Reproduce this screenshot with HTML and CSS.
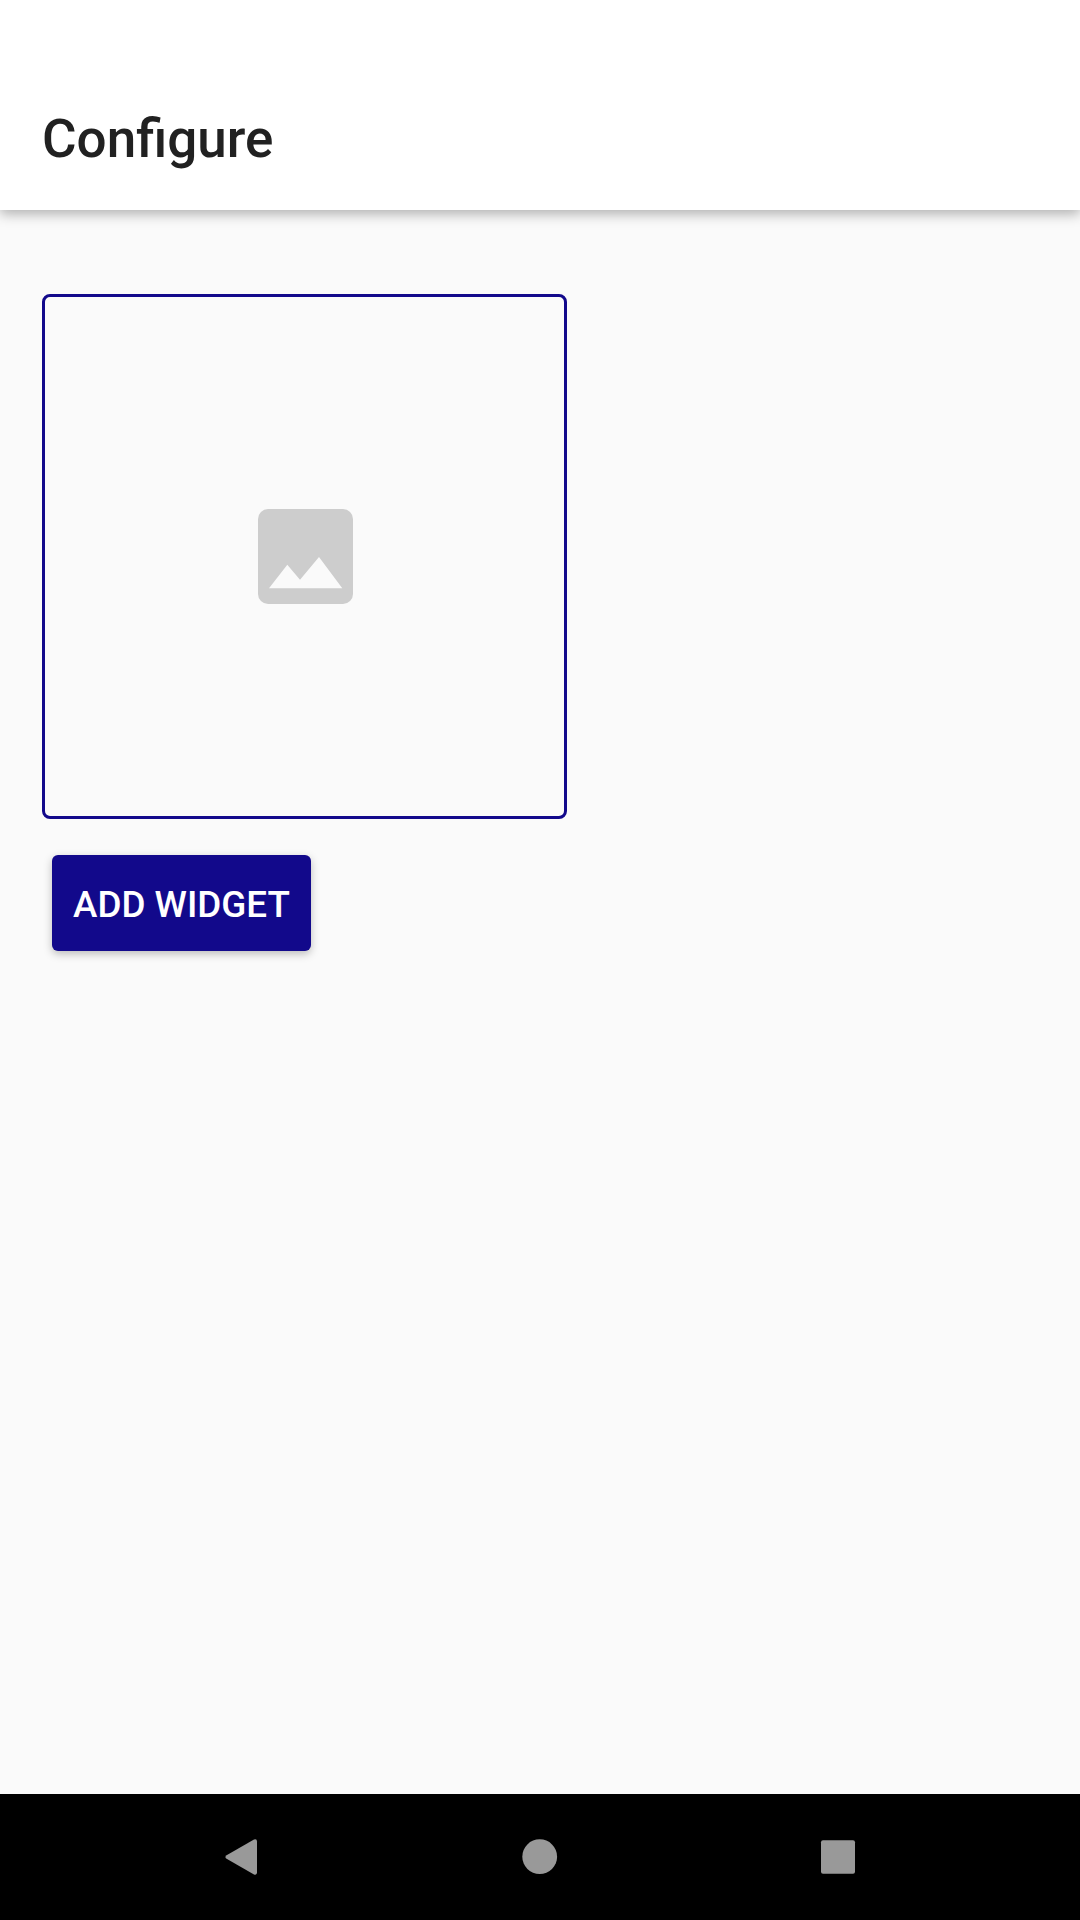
FILE: index.html
```html
<!DOCTYPE html>
<html lang="en">

<head>
    <meta charset="UTF-8">
    <meta name="viewport" content="width=device-width, initial-scale=1.0">
    <title>Configure</title>
    <link rel="stylesheet" href="styles.css">
</head>

<body>
    <header class="toolbar">
        <h1 class="title">Configure</h1>
    </header>
    <main class="content">
        <div class="preview">
            <svg class="placeholder" viewBox="0 0 95 95" aria-hidden="true">
                <rect width="95" height="95" rx="10" fill="#cdcdcd" />
                <polygon points="11,79.3 29.3,55.7 42,70.7 61,48 84.3,79.3" fill="#fafafa" />
            </svg>
        </div>
        <button class="add-btn" type="button">ADD WIDGET</button>
    </main>
    <nav class="navbar">
        <svg class="nav-icon" viewBox="0 0 36 36" aria-hidden="true">
            <path d="M2.6 16.2 L30 0.6 Q33 -0.4 33 2.5 L33 33.5 Q33 36.4 30 35.4 L2.6 19.8 Q0.2 18 2.6 16.2 Z" fill="#999" />
        </svg>
        <svg class="nav-icon" viewBox="0 0 36 36" aria-hidden="true">
            <circle cx="17.7" cy="17.7" r="17.4" fill="#999" />
        </svg>
        <svg class="nav-icon" viewBox="0 0 36 36" aria-hidden="true">
            <rect x="1" y="1.2" width="34" height="33.6" rx="2" fill="#999" />
        </svg>
    </nav>
</body>

</html>
```

FILE: styles.css
```css
* {
    margin: 0;
    padding: 0;
    box-sizing: border-box;
}

body {
    min-height: 1920px;
    display: flex;
    flex-direction: column;
    background-color: #fafafa;
    font-family: Roboto, "Liberation Sans", sans-serif;
}

.toolbar {
    height: 210px;
    padding: 68px 42px 0;
    display: flex;
    align-items: center;
    background-color: #fff;
    box-shadow: 0 4px 12px 0 rgba(0, 0, 0, 0.3);
}

.title {
    font-size: 53px;
    font-weight: 500;
    color: #212121;
    font-variant-ligatures: common-ligatures;
}

.content {
    flex: 1;
    padding: 84px 42px 0;
}

.preview {
    width: 525px;
    height: 525px;
    padding-left: 1px;
    display: flex;
    align-items: center;
    justify-content: center;
    border: 3px solid #12098b;
    border-radius: 8px;
}

.placeholder {
    width: 95px;
    height: 95px;
}

.add-btn {
    display: block;
    width: 259px;
    height: 96px;
    margin: 36px 0 0 10px;
    padding-top: 2px;
    border: none;
    border-radius: 6px;
    background-color: #12098b;
    color: #fff;
    font-family: inherit;
    font-size: 36.75px;
    font-weight: 500;
    box-shadow: 0 3px 8px 0 rgba(0, 0, 0, 0.25);
}

.navbar {
    height: 126px;
    display: flex;
    align-items: center;
    justify-content: center;
    gap: 262px;
    background-color: #000;
}

.nav-icon {
    width: 36px;
    height: 36px;
}
```
